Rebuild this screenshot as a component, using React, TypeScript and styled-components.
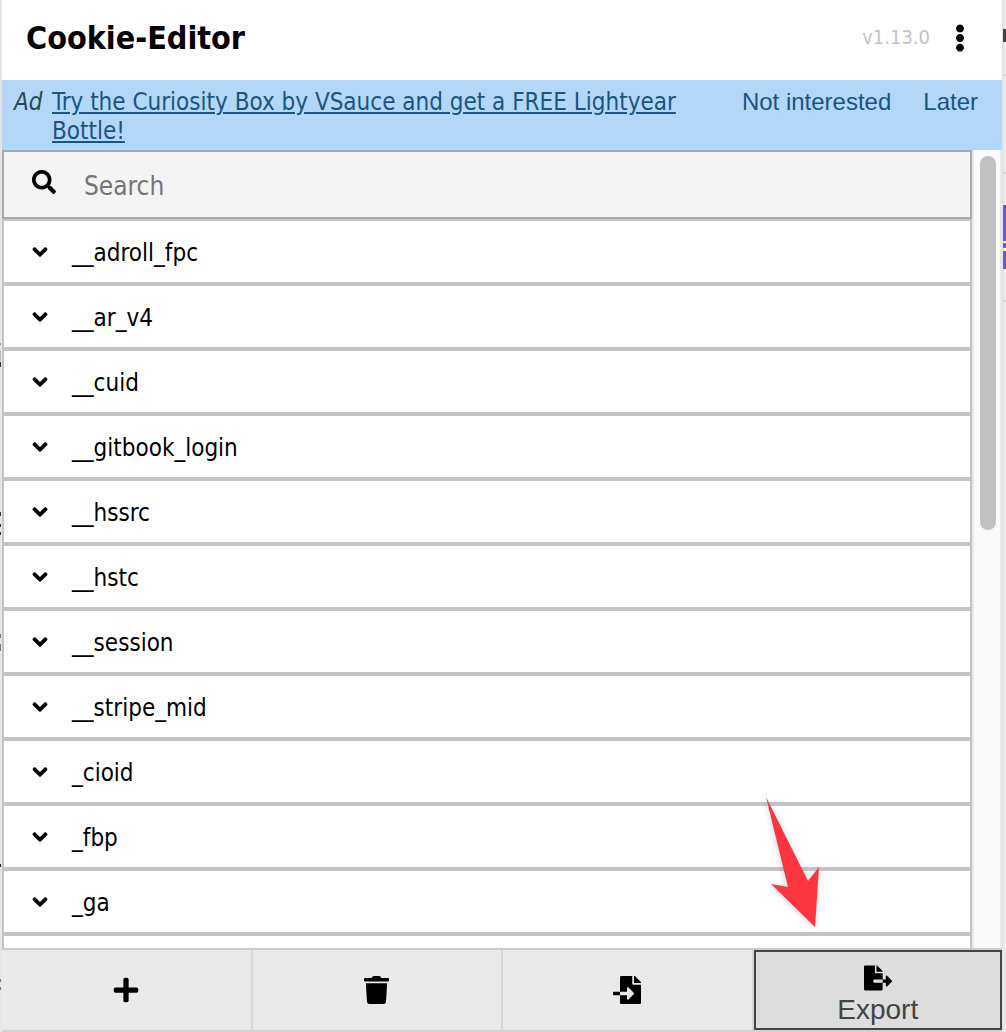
import React, { useState } from "react";
import styled, { createGlobalStyle } from "styled-components";
import {
  FaAngleDown,
  FaEllipsisV,
  FaFileExport,
  FaFileImport,
  FaPlus,
  FaSearch,
} from "react-icons/fa";

const GlobalStyle = createGlobalStyle`
  *, *::before, *::after { box-sizing: border-box; }
  body {
    margin: 0;
    background: #e6e6e6;
    color: #000;
    font-family: Tahoma, "DejaVu Sans Condensed", "DejaVu Sans", sans-serif;
  }
  button, input { font: inherit; color: inherit; margin: 0; }
`;

const sans = `Arial, "Liberation Sans", sans-serif`;

const Page = styled.div`
  display: grid;
  grid-template-columns: 2px minmax(0, 1fr) 4px;
  height: 100vh;
  overflow: hidden;
`;

type Side = "left" | "right";

const Edge = styled.div<{ $side: Side }>`
  position: relative;
  background: ${(p) =>
    p.$side === "left"
      ? "#e6e6e6"
      : "linear-gradient(to right, #dfe1e0, #efeff2)"};
`;

const Mark = styled.span<{ $top: number; $height: number; $color: string; $side: Side }>`
  position: absolute;
  top: ${(p) => p.$top}px;
  ${(p) => p.$side}: 0;
  width: ${(p) => (p.$side === "left" ? 1 : 3)}px;
  height: ${(p) => p.$height}px;
  background: ${(p) => p.$color};
`;

const Popup = styled.div`
  display: flex;
  flex-direction: column;
  min-height: 0;
  background: #fff;
  border-bottom: 2px solid #d2d2d2;
`;

const Header = styled.header`
  display: flex;
  align-items: center;
  height: 80px;
  flex: none;
  padding: 0 30px 4px 24px;
`;

const Title = styled.h1`
  flex: 1;
  margin: 0;
  font-size: 32px;
  line-height: 40px;
  font-weight: 700;
`;

const Version = styled.span`
  padding-bottom: 2px;
  font-size: 20px;
  line-height: 24px;
  color: #c4c4c4;
`;

const MenuButton = styled.button`
  display: flex;
  align-items: center;
  justify-content: center;
  width: 24px;
  height: 32px;
  margin-left: 18px;
  padding: 0;
  border: 0;
  background: none;
  font-size: 28px;
`;

const AdBar = styled.aside`
  display: flex;
  flex: none;
  align-items: flex-start;
  padding: 8px 24px 4px 12px;
  background: #b2d7f9;
  color: #1a5580;
  font-size: 24px;
  line-height: 29px;
`;

const AdLabel = styled.em`
  width: 38px;
  flex: none;
  color: #264653;
`;

const AdText = styled.div`
  flex: 1;
  padding-right: 32px;
`;

const AdLink = styled.a`
  color: inherit;
  text-decoration: underline;
  text-decoration-thickness: 2px;
  text-underline-offset: 2px;
`;

const AdAction = styled.button`
  flex: none;
  margin-left: 32px;
  padding: 0;
  border: 0;
  background: none;
  font-family: ${sans};
  line-height: 28px;
`;

const Body = styled.main`
  display: flex;
  flex: 1;
  min-height: 0;
`;

const ListPane = styled.div`
  flex: 1;
  min-width: 0;
  overflow: hidden;
`;

const SearchBox = styled.label`
  display: flex;
  align-items: center;
  height: 69px;
  padding: 0 28px;
  border: 2px solid #a9a9a9;
  background: #f4f4f4;
  font-size: 24px;
  svg { margin-bottom: 6px; }
`;

const SearchInput = styled.input`
  flex: 1;
  min-width: 0;
  margin-left: 28px;
  padding: 2px 0 0;
  border: 0;
  outline: 0;
  background: none;
  font-size: 26px;
  line-height: 32px;
  &::placeholder { color: #757575; opacity: 1; }
`;

const CookieList = styled.ul`
  margin: 0;
  padding: 0;
  list-style: none;
`;

const CookieItem = styled.li`
  border: 2px solid #c4c4c4;
`;

const CookieButton = styled.button`
  display: flex;
  align-items: center;
  gap: 24px;
  width: 100%;
  height: 61px;
  padding: 0 28px;
  border: 0;
  background: #fff;
  text-align: left;
  font-size: 24px;
  line-height: 32px;
  svg { width: 16px; height: 24px; }
`;

const CookieName = styled.span`
  padding-top: 2px;
`;

const Track = styled.div`
  flex: none;
  width: 30px;
  padding: 6px;
  border: solid #e8e8e8;
  border-width: 0 2px;
  background: #fafafa;
`;

const Thumb = styled.div`
  width: 16px;
  height: 47.6%;
  border-radius: 8px;
  background: #c1c1c1;
`;

const Toolbar = styled.footer`
  display: flex;
  flex: none;
  border-top: 2px solid #cbcbcb;
`;

const ToolButton = styled.button<{ $active?: boolean }>`
  display: flex;
  flex: 1 1 0;
  flex-direction: column;
  align-items: center;
  justify-content: center;
  gap: 2px;
  height: 80px;
  padding: 0;
  border: 0 solid #d6d6d6;
  border-right-width: 2px;
  background: #e9e9e9;
  font-family: ${sans};
  font-size: 28px;
  line-height: 32px;
  ${(p) =>
    p.$active &&
    "padding-top: 10px; border: 0; background: #ddd; box-shadow: inset 0 0 0 2px #444;"}
`;

const ToolLabel = styled.span`
  color: #444;
`;

const Pointer = styled.svg`
  position: absolute;
  right: 183px;
  bottom: 102px;
  width: 58px;
  height: 134px;
  overflow: visible;
  pointer-events: none;
  filter: drop-shadow(0 1px 3px rgba(0, 0, 0, 0.2));
`;

const TrashIcon = () => (
  <svg width="25" height="28" viewBox="0 0 25 28" aria-hidden="true">
    <path d="M1 2H7.5L8.6.6Q9 0 10 0H15Q16 0 16.4.6L17.5 2H24Q25 2 25 3V4.4Q25 5.4 24 5.4H1Q0 5.4 0 4.4V3Q0 2 1 2Z" />
    <path d="M1.8 7.2H23.2L22 25.8Q21.8 28 19.6 28H5.4Q3.2 28 3 25.8Z" />
  </svg>
);

const cookies = [
  "__adroll_fpc",
  "__ar_v4",
  "__cuid",
  "__gitbook_login",
  "__hssrc",
  "__hstc",
  "__session",
  "__stripe_mid",
  "_cioid",
  "_fbp",
  "_ga",
  "",
];

const leftMarks = [
  { top: 343, height: 2, color: "#999" },
  { top: 351, height: 10, color: "#bbb" },
  { top: 362, height: 5, color: "#333" },
  { top: 512, height: 4, color: "#333" },
  { top: 524, height: 3, color: "#333" },
  { top: 532, height: 3, color: "#333" },
  { top: 634, height: 4, color: "#777" },
  { top: 644, height: 7, color: "#777" },
  { top: 864, height: 3, color: "#222" },
  { top: 979, height: 3, color: "#777" },
  { top: 987, height: 3, color: "#777" },
];

const rightMarks = [
  { top: 29, height: 13, color: "#444" },
  { top: 74, height: 2, color: "#d4d4d6" },
  { top: 172, height: 2, color: "#d4d4d6" },
  { top: 205, height: 36, color: "#6e56e8" },
  { top: 243, height: 5, color: "#6e56e8" },
  { top: 251, height: 18, color: "#6e56e8" },
  { top: 300, height: 2, color: "#d4d4d6" },
];

export default function App() {
  const [query, setQuery] = useState("");
  return (
    <>
      <GlobalStyle />
      <Page>
        <Edge $side="left">
          {leftMarks.map((m) => (
            <Mark key={m.top} $side="left" $top={m.top} $height={m.height} $color={m.color} />
          ))}
        </Edge>
        <Popup>
          <Header>
            <Title>Cookie-Editor</Title>
            <Version>v1.13.0</Version>
            <MenuButton aria-label="Menu"><FaEllipsisV /></MenuButton>
          </Header>
          <AdBar>
            <AdLabel>Ad</AdLabel>
            <AdText>
              <AdLink href="#">Try the Curiosity Box by VSauce and get a FREE Lightyear Bottle!</AdLink>
            </AdText>
            <AdAction>Not interested</AdAction>
            <AdAction>Later</AdAction>
          </AdBar>
          <Body>
            <ListPane>
              <SearchBox>
                <FaSearch />
                <SearchInput
                  aria-label="Search"
                  placeholder="Search"
                  value={query}
                  onChange={(e) => setQuery(e.target.value)}
                />
              </SearchBox>
              <CookieList>
                {cookies.filter((c) => c.includes(query)).map((c) => (
                  <CookieItem key={c}>
                    <CookieButton><FaAngleDown /><CookieName>{c}</CookieName></CookieButton>
                  </CookieItem>
                ))}
              </CookieList>
            </ListPane>
            <Track><Thumb /></Track>
          </Body>
          <Toolbar>
            <ToolButton aria-label="Add"><FaPlus /></ToolButton>
            <ToolButton aria-label="Delete all"><TrashIcon /></ToolButton>
            <ToolButton aria-label="Import"><FaFileImport /></ToolButton>
            <ToolButton $active><FaFileExport /><ToolLabel>Export</ToolLabel></ToolButton>
          </Toolbar>
        </Popup>
        <Edge $side="right">
          {rightMarks.map((m) => (
            <Mark key={m.top} $side="right" $top={m.top} $height={m.height} $color={m.color} />
          ))}
        </Edge>
      </Page>
      <Pointer viewBox="0 0 58 134" aria-hidden="true">
        <path fill="#fb3640" d="M1 1 43 85 54 71 50 131 6 88 23 91Z" />
      </Pointer>
    </>
  );
}
